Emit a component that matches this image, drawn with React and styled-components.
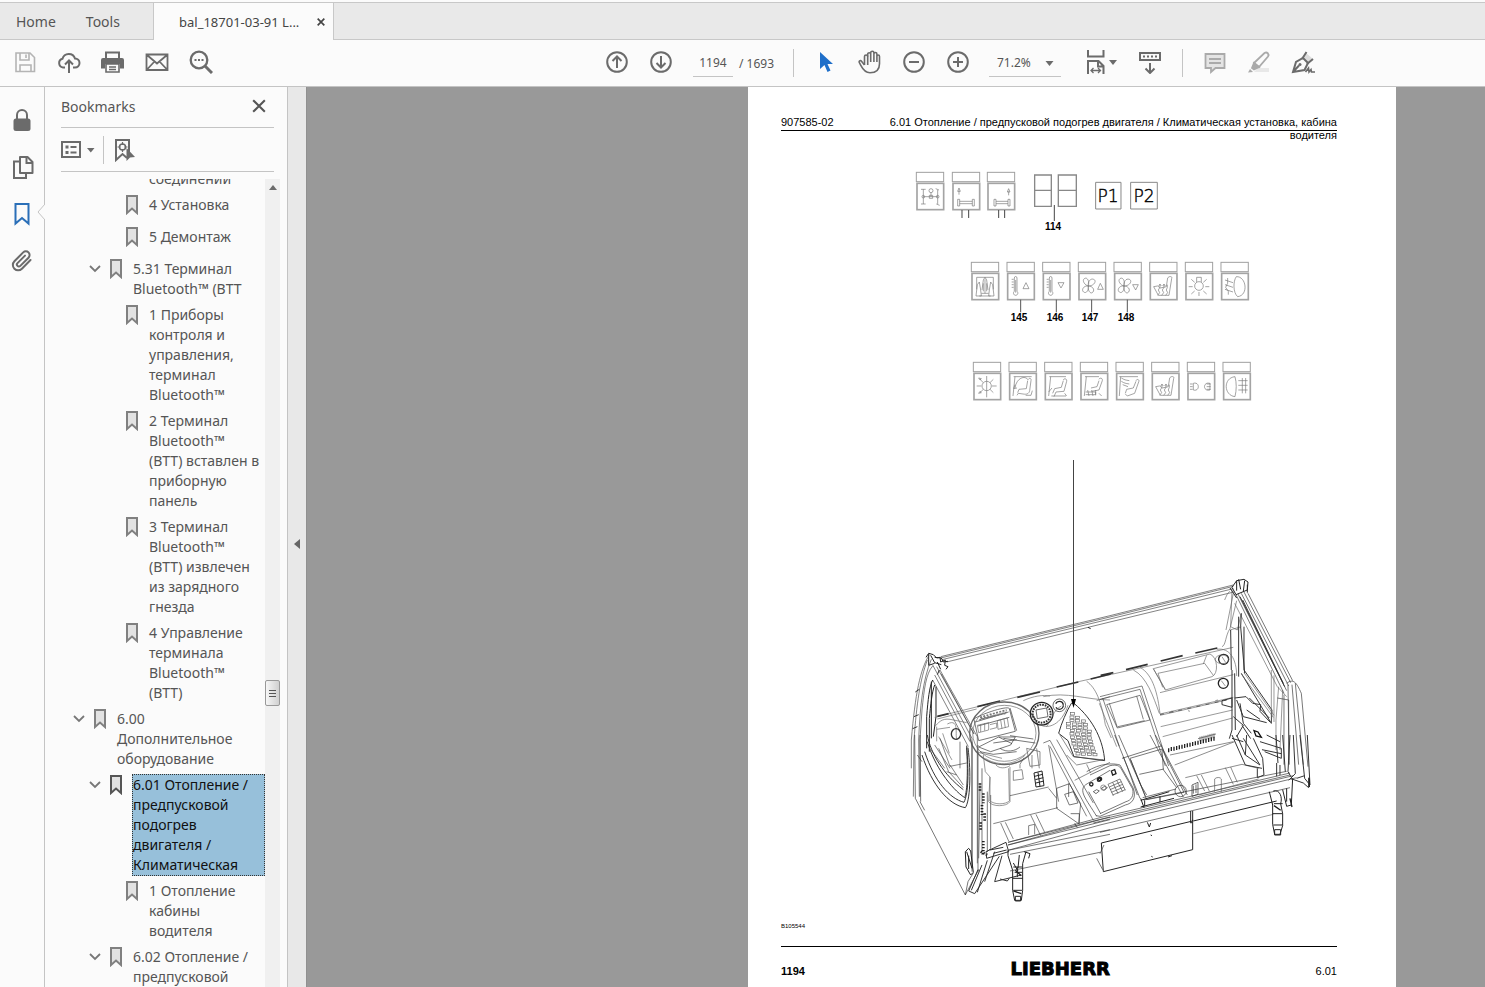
import React from "react";
import styled, { createGlobalStyle } from "styled-components";

const GlobalStyle = createGlobalStyle`
  * {
    box-sizing: border-box;
  }

  body {
    margin: 0;
    font-family: "Noto Sans", "Open Sans", sans-serif;
    font-size: 14px;
    color: #555;
    background: #fbfbfb;
  }

  button,
  input,
  select {
    font: inherit;
    color: inherit;
    border: 0;
    padding: 0;
    margin: 0;
    background: none;
  }
`;

const Window = styled.div`
  display: flex;
  flex-direction: column;
  height: 100vh;
  padding-top: 2px;
  overflow: hidden;
`;

const TabBar = styled.nav`
  display: flex;
  flex: none;
  height: 38px;
  background: #e9e9e9;
  border-top: 1px solid #c8c8c8;
  border-bottom: 1px solid #c8c8c8;
`;

const HomeTabs = styled.div`
  display: flex;
  width: 153px;
  padding-left: 16px;
  gap: 30px;
`;

const FileTab = styled.div`
  display: flex;
  align-items: center;
  justify-content: space-between;
  width: 181px;
  height: 37px;
  padding: 0 8px 0 25px;
  color: #444;
  font-size: 13px;
  background: #fbfbfb;
  border: solid #c8c8c8;
  border-width: 0 1px;
`;

const Plain = styled.button`
  display: flex;
  align-items: center;
`;

const Toolbar = styled.div`
  display: flex;
  flex: none;
  align-items: center;
  height: 47px;
  padding: 0 160px 0 3px;
  border-bottom: 1px solid #c4c4c4;
`;

const ToolGroup = styled.div`
  display: flex;
  align-items: center;
  margin-left: ${({ $end }) => ($end ? "auto" : 0)};
`;

const ToolButton = styled.button`
  display: flex;
  align-items: center;
  justify-content: center;
  width: 44px;
  height: 42px;
  padding-bottom: 2px;
  color: ${({ $color }) => $color || "#6b6b6b"};
`;

const FitButton = styled(ToolButton)`
  width: 46px;
  gap: 1px;
`;

const Separator = styled.span`
  width: 1px;
  height: 28px;
  margin: 0 ${({ $space = 10 }) => $space}px;
  background: #c4c4c4;
`;

const PageBox = styled.label`
  display: flex;
  align-items: center;
  gap: 6px;
  margin: 0 9px 0 10px;
  font-size: 12px;
`;

const PageInput = styled.input`
  width: 40px;
  height: 28px;
  text-align: center;
  border-bottom: 1px solid #c4c4c4;
  outline: none;
`;

const ZoomBox = styled.label`
  position: relative;
  margin: 0 16px 0 9px;
  font-size: 12px;
`;

const ZoomSelect = styled.select`
  width: 72px;
  height: 28px;
  padding-left: 8px;
  appearance: none;
  border-bottom: 1px solid #c4c4c4;
`;

const ZoomArrow = styled.svg`
  position: absolute;
  right: 7px;
  top: 12px;
`;

const Main = styled.main`
  display: flex;
  flex: 1;
  min-height: 0;
`;

const Rail = styled.div`
  position: relative;
  display: flex;
  flex: none;
  flex-direction: column;
  align-items: center;
  gap: 15px;
  width: 45px;
  padding-top: 17px;
  border-right: 1px solid #c4c4c4;
`;

const RailButton = styled.button`
  display: flex;
  align-items: center;
  justify-content: center;
  width: 44px;
  height: 32px;
  color: ${({ $active }) => ($active ? "#2a6fb8" : "#6b6b6b")};
`;

const Notch = styled.svg`
  position: absolute;
  right: -1px;
  top: 117px;
`;

const Panel = styled.aside`
  display: flex;
  flex: none;
  flex-direction: column;
  width: 243px;
  border-right: 1px solid #c4c4c4;
`;

const PanelTitle = styled.div`
  display: flex;
  flex: none;
  align-items: center;
  justify-content: space-between;
  height: 41px;
  margin: 0 13px 0 16px;
  padding: 0 8px 2px 0;
  border-bottom: 1px solid #c4c4c4;
`;

const PanelTools = styled.div`
  display: flex;
  flex: none;
  align-items: center;
  height: 44px;
  margin: 0 13px 0 16px;
  border-bottom: 1px solid #c4c4c4;
  color: #6b6b6b;
`;

const TreeArea = styled.div`
  display: flex;
  flex: 1;
  min-height: 0;
  margin: 7px 7px 0 0;
`;

const Tree = styled.ul`
  flex: 1;
  margin: 0;
  padding: 0;
  overflow: hidden;
  list-style: none;

  li:first-child {
    margin-top: -10px;
  }
`;

const TreeRow = styled.li`
  display: flex;
  align-items: flex-start;
  min-height: 26px;
  margin-bottom: 6px;
  padding-left: ${({ $level }) => 28 + $level * 16}px;
  color: ${({ $selected }) => ($selected ? "#111" : "#555")};
`;

const Toggle = styled.button`
  width: 12px;
  height: 18px;
  margin-right: 9px;
  line-height: 0;
  color: #777;
`;

const Mark = styled.svg`
  flex: none;
  width: 12px;
  margin-right: 10px;
  color: ${({ $selected }) => ($selected ? "#555" : "#808080")};
`;

const TreeLink = styled.a`
  flex: 1;
  margin: ${({ $selected }) => ($selected ? "-1px 0" : 0)};
  padding-left: ${({ $selected }) => ($selected ? 0 : 1)}px;
  line-height: 20px;
  white-space: pre;
  color: inherit;
  text-decoration: none;
  background: ${({ $selected }) => ($selected ? "#97c0da" : "none")};
  border: ${({ $selected }) => ($selected ? "1px dotted #333" : 0)};
`;

const ScrollTrack = styled.div`
  display: flex;
  flex-direction: column;
  align-items: center;
  width: 15px;
  background: #f0f0f0;
`;

const ScrollUp = styled.button`
  width: 15px;
  height: 17px;
  line-height: 0;
`;

const Thumb = styled.div`
  display: flex;
  flex-direction: column;
  align-items: center;
  justify-content: center;
  gap: 2px;
  width: 15px;
  height: 26px;
  margin-top: 484px;
  border: 1px solid #999;
  border-radius: 2px;
  background: linear-gradient(90deg, #f6f6f6, #d0d0d0);
`;

const Grip = styled.span`
  width: 7px;
  height: 1px;
  background: #555;
`;

const Splitter = styled.button`
  flex: none;
  width: 18px;
  padding-top: 13px;
  background: #e8e8e8;
`;

const Viewer = styled.section`
  display: flex;
  flex: 1;
  justify-content: flex-end;
  padding-right: 89px;
  overflow: hidden;
  background: #999;
  border-left: 1px solid #909090;
`;

const Sheet = styled.article`
  display: flex;
  flex: 0 1 648px;
  flex-direction: column;
  padding: 29px 59px 0 33px;
  font-family: "Liberation Sans", Arial, sans-serif;
  font-size: 11px;
  line-height: 13px;
  color: #000;
  background: #fff;
`;

const SheetHead = styled.header`
  display: flex;
  justify-content: space-between;
  height: 15px;
  border-bottom: 1px solid #000;
  white-space: nowrap;
`;

const HeadRest = styled.div`
  margin-top: -2px;
  text-align: right;
`;

const Figure = styled.figure`
  margin: 18px 0 0;

  svg {
    display: block;
    width: 100%;
  }
`;

const Caption = styled.figcaption`
  margin-top: 10px;
  font-size: 6px;
`;

const SheetFoot = styled.footer`
  display: flex;
  align-items: flex-end;
  justify-content: space-between;
  margin-top: 13px;
  padding-top: 11px;
  line-height: 17px;
  border-top: 1px solid #000;
`;

const Logo = styled.span`
  font-family: "DejaVu Sans", sans-serif;
  font-weight: 700;
  font-size: 18px;
  line-height: 22px;
  -webkit-text-stroke: 1px #000;
`;

const Icon = ({ size = 24, children, ...rest }) => (
  <svg
    width={size}
    height={size}
    viewBox="0 0 24 24"
    fill="none"
    stroke="currentColor"
    strokeWidth="2"
    aria-hidden="true"
    {...rest}
  >
    {children}
  </svg>
);

const Caret = ({ d = "M0 0h8L4 5z" }) => (
  <svg width="8" height="5" viewBox="0 0 8 5" aria-hidden="true">
    <path d={d} fill="#6b6b6b" />
  </svg>
);

const SaveIcon = () => (
  <Icon strokeWidth="1.6">
    <path d="M3 3h14l4.500 4.500V21.500H3z" />
    <path d="M7 3v7h9V3M13 4.500v3.500M7 21v-6h11v6" />
  </Icon>
);

const CloudIcon = () => (
  <Icon>
    <path d="M8 17.500H6a4.500 4.500 0 0 1-.5-8.800A6.500 6.500 0 0 1 18 8.500a4.500 4.500 0 0 1 0 9h-2" />
    <path d="M12 23V11M8 14.500l4-4 4 4" />
  </Icon>
);

const PrintIcon = () => (
  <Icon>
    <path d="M5 8V2.500h13V8" />
    <path d="M0 10a2 2 0 0 1 2-2h19a2 2 0 0 1 2 2v8.500h-4V14H4v4.500H0z" fill="currentColor" stroke="none" />
    <path d="M5 14v8h13v-8zM8 17h7M8 19.500h7" strokeWidth="1.600" />
  </Icon>
);

const MailIcon = () => (
  <Icon strokeWidth="1.8">
    <path d="M1.500 4.500h21v15.500h-21zM2 5l10 8.500L22 5M2 19.500l7.500-8M22 19.500l-7.500-8" />
  </Icon>
);

const SearchIcon = () => (
  <Icon>
    <circle cx="10" cy="10" r="8.300" strokeWidth="2.300" />
    <path d="M16 16l7 7" strokeWidth="3" />
    <path d="M5.500 10h2M9 10h2M12.500 10h2" />
  </Icon>
);

const CircleIcon = ({ d }) => (
  <Icon>
    <circle cx="12" cy="12" r="9.800" />
    <path d={d} />
  </Icon>
);

const CursorIcon = () => (
  <Icon>
    <path d="M6 2v17l4.500-4 3 7 3-1.500-3-6.500H19z" fill="currentColor" stroke="none" />
  </Icon>
);

const HandIcon = () => (
  <Icon strokeWidth="1.6">
    <path d="M6.500 15L3.500 11.200c-1.300-1.500-3 .1-2 1.700 2 3.400 4 9.800 10.500 9.800 6 0 9.500-3.400 9.500-9V6.500c0-2-2.600-2-2.600 0V12 4c0-2-3-2-3 0v8V2.800c0-2-3.200-2-3.200 0V12 4.200c0-2-3-2-3 0V15" />
    <path d="M9.700 6.500c0-2-3.200-2-3.200 0V15" />
  </Icon>
);

const FitIcon = () => (
  <Icon>
    <path d="M4 0v6.500h15.500V0" />
    <path d="M4 24V11h10.500l5 5v8M14 11v5.500h5" />
    <path d="M7 20.500h9.500M9.500 18L7 20.500 9.500 23M14 18l2.500 2.500L14 23" strokeWidth="1.300" />
  </Icon>
);

const KeyboardIcon = () => (
  <Icon>
    <path d="M2 3h20v7H2z" />
    <path d="M5 6.500h2M9 6.500h2M13 6.500h2M17 6.500h2M12 13v10M7.500 18.500l4.500 4.500 4.500-4.500" />
  </Icon>
);

const CommentIcon = () => (
  <Icon strokeWidth="1.8">
    <path d="M2.500 4h19v14h-9L8 22V18H2.500z" fill="#e4e4e4" />
    <path d="M6 9h12M6 13h12" />
  </Icon>
);

const HighlightIcon = () => (
  <Icon strokeWidth="1.8">
    <path d="M11 18h11v4H7z" fill="#e8e8e8" stroke="none" />
    <path d="M7 13L17.500 3c2.500-1.500 5 1 3.500 3.500L12 17z" />
    <path d="M7 13l-2 5 2 1.500 5-2.500z" fill="#aaa" />
    <path d="M3 19l3 3-5 .5z" fill="#aaa" stroke="none" />
  </Icon>
);

const SignIcon = () => (
  <Icon strokeWidth="2">
    <path d="M12 8l3-5 7 6-5 4z" fill="#ddd" stroke="none" />
    <path d="M2 22L5 12l7-4 5 5-3.500 7zM2 22l6-6.500" />
    <path d="M11 9l4.500-7M16 14l6-5" />
    <circle cx="9" cy="14.500" r="1.500" fill="currentColor" stroke="none" />
    <path d="M14.500 22l3-4 .5 4 2-2.500.5 2.500H24" strokeWidth="1.600" />
  </Icon>
);

const LockIcon = () => (
  <Icon>
    <rect x="3.500" y="10.500" width="17" height="12.500" rx="2.500" fill="currentColor" stroke="none" />
    <path d="M7 12V7a5 5 0 0 1 10 0v5" />
  </Icon>
);

const PagesIcon = () => (
  <Icon>
    <path d="M10 2h7.500l5 5v11H10z" strokeLinejoin="round" />
    <path d="M16.500 2v6H22M9 6.500H4V23h12v-4" />
  </Icon>
);

const ClipIcon = () => (
  <Icon>
    <path
      d="M20.500 11l-8.600 8.700a5.300 5.300 0 0 1-7.500-7.500l8.800-8.800a3.700 3.700 0 0 1 5.300 5.300l-8.200 8.200a1.900 1.900 0 0 1-2.800-2.800l7.500-7.500"
      strokeLinecap="round"
    />
  </Icon>
);

const switchGlyphs = {
  axles: "M12 18h14M19 18v44M12 62h14M56 16l10 4M62 20v42M58 62l10 4M19 40h43M42 28v12M37 36h10v9H37zM36 22a6 6 0 1 0 12 0a6 6 0 1 0-12 0M15 40a4 4 0 1 0 8 0a4 4 0 1 0-8 0M58 40a4 4 0 1 0 8 0a4 4 0 1 0-8 0",
  axleLeft: "M18 34V22M14 24l4-10 4 10zM14 48v20M20 48v20M14 48h6M14 68h6M20 54h38M20 61h38M58 48v20M64 48v20M58 48h6M58 68h6",
  axleRight: "M62 36V24M58 26l4-10 4 10zM18 48v20M24 48v20M18 48h6M18 68h6M24 54h36M24 61h36M60 48v20M66 48v20M60 48h6M60 68h6",
  defrost: "M14 12h50v36M14 12v36M12 68l4-34 6-8 4 24 2 18zM66 68l-4-34-6-8-4 24-2 18zM30 50l4-30 5-8 5 8 4 30M34 54V30M44 54V30M39 60V18M22 68h34M28 60h22",
  tempUp: "M20 54V14c0-6 8-6 8 0v40c5 4 2 12-4 12s-9-8-4-12zM12 18h6M12 26h6M12 34h6M12 42h6M24 20v38M46 46l9-18 9 18z",
  tempDown: "M18 54V14c0-6 8-6 8 0v40c5 4 2 12-4 12s-9-8-4-12zM10 18h6M10 26h6M10 34h6M10 42h6M22 20v38M44 28l9 16 9-16z",
  fanUp: "M28 38c-10-2-20-16-12-22s16 6 12 22c-2-12 6-24 16-20s2 20-16 20c12 0 20 10 14 18s-16-2-14-18c2 12-6 24-14 18s0-20 14-18M56 48l8-18 9 18z",
  fanDown: "M28 38c-10-2-20-16-12-22s16 6 12 22c-2-12 6-24 16-20s2 20-16 20c12 0 20 10 14 18s-16-2-14-18c2 12-6 24-14 18s0-20 14-18M54 34l9 16 8-16z",
  seatHeat: "M10 40l12-2 8 6 18-4 4-26c3-6 16-6 12 2l-8 50H24zM22 66l6-8-4-8 5-8v-8M34 66l6-8-4-8 5-8v-8M46 66l6-8-4-8 3-8v-8M25 38l4-6 4 6M37 38l4-6 4 6",
  lamp: "M26 38a13 13 0 1 0 26 0a13 13 0 1 0-26 0M32 26V12h14v14M8 40h12M58 40h12M16 18l10 9M62 18l-10 9M16 62l10-9M62 62l-10-9M39 56v12",
  fogFront: "M44 10c30-2 38 56 4 60-14-12-14-46-4-60M10 20l24 8M10 34l24 8M10 48l24 8M18 14v16l-6 12 8 12v10",
  work: "M24 38a14 14 0 1 0 28 0a14 14 0 1 0-28 0M38 8v64M8 38h14M54 38h14M18 18l10 10M58 18L48 28M18 58l10-10M58 58L48 48M14 14l8 2-4 4zM14 60l8-2-4-4z",
  airAll: "M12 10h54M16 10L10 68M56 18c4-6 10-2 8 4l-4 30c-2 10-10 12-20 10l-14-2-4 6M54 22l-4 24-22 2-4 10M16 44c4-30 30-40 40-24M16 34l-4 12 10-2M48 66h16l4-14",
  airMid: "M12 10h50M16 10L10 68M54 20c2-6 12-4 10 4l-8 30-24 2-6 14M54 22l-6 20-20 4-6 14M10 56l10-12M18 68h44M58 60l6 8",
  airFeet: "M12 10h42M16 10L10 68M54 18c2-6 12-4 10 4l-10 28-22 4M54 22l-6 18-18 4M14 56h30v8H14M20 50l4 18M32 50l4 18M44 50v16M54 60l8 8",
  airFace: "M8 10h56M12 10L8 68M58 22c2-6 12-4 8 4l-12 34-22 8-6-6M58 24l-8 20-20 4-4 12M14 14c10 6 12 6 24 8M14 24c10 6 12 6 24 8M18 34l16 6",
  marker: "M16 30c20-6 20 26 0 20zM6 32h8M6 40h8M6 48h8M66 30c-22-6-22 26 0 20zM56 32h12M56 40h12M56 48h12",
  fogRear: "M34 10c-36 4-34 56 0 60 5-20 5-42 0-60M44 22h28M44 36h28M44 50h28M56 14v46M66 14v46",
};

const Switch = ({ x, y, glyph }) => (
  <g transform={`translate(${x} ${y})`}>
    <rect width="82" height="28" stroke="#a0a0a0" />
    <rect x="2" y="33" width="80" height="79" stroke="#a4a4a4" strokeWidth="5" />
    <path d={switchGlyphs[glyph]} transform="translate(2 33)" stroke="#777" strokeWidth="2" />
  </g>
);

const rowTwo = ["defrost", "tempUp", "tempDown", "fanUp", "fanDown", "seatHeat", "lamp", "fogFront"];
const rowThree = ["work", "airAll", "airMid", "airFeet", "airFace", "seatHeat", "marker", "fogRear"];

const SwitchRows = () => (
  <g fill="none" stroke="#888" strokeWidth="3">
    <g transform="translate(900 165) scale(.3333)">
      <Switch x={49} y={22} glyph="axles" />
      <Switch x={157} y={22} glyph="axleLeft" />
      <Switch x={262} y={22} glyph="axleRight" />
      <path d="M404 30h50v94h-50zM404 76h50M475 30h54v94h-54zM475 76h54" strokeWidth="4" />
      <path d="M587 52h76v80h-76zM692 52h80v80h-80z" />
      <path d="M186 135v24M206 135v24M296 135v24M314 135v24M463 120v48" stroke="#444" />
    </g>
    <g transform="translate(960 255) scale(.3333)">
      {rowTwo.map((glyph, i) => (
        <Switch key={glyph} x={34 + i * 107} y={22} glyph={glyph} />
      ))}
      <path d="M182 134v38M289 134v38M395 134v38M502 134v38" stroke="#555" />
      {rowThree.map((glyph, i) => (
        <Switch key={glyph} x={40 + i * 107} y={322} glyph={glyph} />
      ))}
    </g>
  </g>
);

const Labels = () => (
  <g fontFamily="Liberation Sans, Arial, sans-serif" textAnchor="middle">
    <g fontSize="10" fontWeight="700">
      <text x="1053" y="230">114</text>
      <text x="1019" y="321">145</text>
      <text x="1055" y="321">146</text>
      <text x="1090" y="321">147</text>
      <text x="1126" y="321">148</text>
    </g>
    <g fontFamily="DejaVu Sans, sans-serif" fontSize="17" fontWeight="200" stroke="#000" strokeWidth=".4">
      <text x="1108" y="202">P1</text>
      <text x="1144" y="202">P2</text>
    </g>
  </g>
);

// x range of the keys in every row of the switch panel
const keyRows = [
  [512, 530], [510, 545], [510, 552], [500, 560], [500, 565], [512, 575], [510, 575],
  [512, 585], [514, 585], [516, 590], [520, 592], [524, 592], [528, 592],
];

const Keys = () =>
  keyRows.map(([from, to], row) => {
    const keys = [];
    for (let x = from; x < to - 6; x += 17) {
      keys.push(
        <rect key={x} x={x} y={428 + row * 10 + (x - from) / 20} width="12" height="7" />
      );
    }
    return <g key={row}>{keys}</g>;
  });

const CabFrontLeft = () => (
  <g>
    <path d="M122 260L630 137l370-92M122 264L630 141l370-92M126 269L630 147l370-91M140 276L630 156l372-90" stroke="#444" />
    <path d="M78 262l8-12 14 4 10 10 10-2 2 14 14-6-2 16 10 4-6 8M86 252v34l18-6M92 256l12 22 20 6M104 262l20 2 6 12 14-2M112 276l10 22M118 300l-6 14M564 172l8 4" stroke="#222" strokeWidth="3" />
    <path d="M88 254C60 300 46 370 34 510v85M82 270C60 330 50 400 42 510l-2 170M94 268C68 330 60 410 56 510l2 170M98 288C78 310 72 360 66 420l-6 90v170" stroke="#444" />
    <path d="M98 285L216 505v400M110 290l112 202M120 300l112 200v380M98 330L205 530M104 315l106 200M124 312l98 180" stroke="#444" />
    <path d="M98 330c-10 20-14 60-18 110v95M104 345c-8 20-12 60-16 100v100M108 350v90l-8 60M94 335v170" stroke="#222" strokeWidth="3" />
    <path d="M46 366l12-8M42 440l14-6M38 476l14-6" stroke="#333" strokeWidth="3" />
    <path d="M104 442L540 334l460-102M112 447l118-30M430 380c70-16 130 10 200 10M370 392c30-14 60-18 80-14M560 334c28 20 44 60 56 130l18 40M590 392l40-12M598 400l52 130" />
    <path d="M112 439l34-8M232 410l68-17M352 382l68-16M470 351l65-15M572 327l60-15" stroke="#333" strokeWidth="5" />
    <path d="M104 470c10-10 20-26 46-22l50 10M110 470v44M142 462c40-20 20 40 30 48M110 478l40-6M116 500l40 70M128 490l20 60" />
    <ellipse cx="168" cy="492" rx="14" ry="16" stroke="#333" strokeWidth="4" />
    <ellipse cx="313" cy="490" rx="104" ry="94" strokeWidth="4" />
    <ellipse cx="313" cy="490" rx="95" ry="84" />
    <path d="M222 448c2-8 100-44 106-32l18 68-110 28zM226 456l100-30M234 468l94-26M330 414l20 68" stroke="#333" />
    <path d="M240 442l80-22M238 450l86-24M242 446l74-16" stroke="#777" strokeDasharray="6 4" strokeWidth="5" />
    <path d="M232 466l34-8v22l-30 8zM242 464v22M254 460v22M270 464l20-5v14l-20 5M292 452l30-8 4 26-32 8zM302 450l4 26M312 448l4 26" />
    <circle cx="425" cy="431" r="34" stroke="#222" strokeWidth="4" />
    <circle cx="425" cy="431" r="27" stroke="#333" strokeDasharray="5 3" strokeWidth="6" />
    <path d="M408 420l32-6 4 26-32 6z" stroke="#222" />
    <circle cx="478" cy="406" r="19" stroke="#222" />
    <circle cx="478" cy="406" r="12" stroke="#222" strokeWidth="4" strokeDasharray="30 12" />
    <path d="M514 400c-14 24-30 60-38 90l28 22 18 48 92 12c-4-56-30-120-92-172z" stroke="#333" strokeWidth="3" />
    <path d="M440 470c14-20 20-50 44-62M424 466c20 10 60 0 80-60" />
    <g stroke="#666">
      <Keys />
    </g>
  </g>
);

const CabFrontRight = () => (
  <g>
    <path d="M396 52l14-20 22-4 12 8-2 24-34 14zM410 32v30M416 28l6 30M434 32l-4 32M390 54l20 30M442 44v24" stroke="#222" strokeWidth="3" />
    <path d="M408 74L552 370M414 72l146 290M424 70l142 278M432 66l140 272M444 70l134 262" stroke="#333" />
    <path d="M420 80l134 270M428 90l122 250" stroke="#333" strokeWidth="3" />
    <path d="M404 100l128 250 28 30M410 92l-20 84c-14 20-12 50-24 54M396 60l-4 110 20 10 12-50M400 70l-22 110M374 90c8-20 12-24 16-26M390 180l34-10" />
    <path d="M424 130l-2 40 12 140M416 140v180M392 180l2 120M432 170v130l84 120-2 40-90-150" stroke="#333" strokeWidth="3" />
    <path d="M424 312l96 130M432 308l90 128M514 300v160M522 316v140M536 350l-8 100v90M548 360l-8 180" />
    <path d="M560 340c20-16 30-2 44 30l20 220M564 344l4 240M576 344l20 240M586 340l24 244M532 384l34 6v180M552 374v210" stroke="#333" />
    <path d="M2 316l38-8M78 299l65-16M182 273l66-16M286 249l66-15" stroke="#333" strokeWidth="5" />
    <path d="M100 300c40 20 60 80 78 130M120 292c40 22 54 84 60 140l220-50M160 296l170-44c24 10 26 60 6 68l-140 40zM174 310l140-30 26 36M160 296l36 62M174 310l14 42M320 256l-10 26M350 238c40-6 60 30 60 80M180 368l220-54" />
    <path d="M180 436l200-46M182 470l216-50M188 500l210-56M214 424l8 2M264 422l6 2M346 392l8-2" stroke="#666" />
    <path d="M180 434l200-44" stroke="#333" strokeDasharray="12 16" />
    <circle cx="371" cy="268" r="15" stroke="#222" strokeWidth="4" />
    <ellipse cx="366" cy="268" rx="20" ry="13" />
    <circle cx="370" cy="340" r="15" stroke="#222" strokeWidth="4" />
    <path d="M364 332l12 16M366 260l10 16" />
    <path d="M0 380l126-32 80 240M0 388l120-30 76 230M8 384l50 145M20 404l100-28 30 74-98 24zM28 400l24 72M110 378l20 70M54 470l80-18" stroke="#444" />
    <path d="M294 506l54-14M300 500v14M306 498v14M312 497v14M318 496v14M324 494v14M330 492v14M336 491v14M342 490v14" stroke="#444" />
    <path d="M396 300v180l-8 26M404 310l2 170M366 392l30-8v28l-30-8zM404 384l34-4 20 20 24 4-2 20 30 32M420 400l10 60 24 30M410 390l20 50 70 18M440 420l40 28M448 384l60 60M426 466l26 40M400 440l30 26-20 34" stroke="#333" strokeWidth="3" />
    <path d="M462 482l12 4 10 16-16-4z" stroke="#111" strokeWidth="4" />
  </g>
);

const CabRearLeft = () => (
  <g>
    <path d="M44 0l2 190 150 290 40-76M60 200l14 26M60 0l2 200M196 480l8-40 16-26M52 60l14 20" stroke="#333" />
    <path d="M66 60c30 90 80 150 130 158 14-20 18-100 8-180M74 50c30 90 74 140 118 152 14-30 14-90 8-170M82 20c20 70 70 140 112 168 8-20 10-80 6-150M82 0c10 56 50 120 108 164" stroke="#333" strokeWidth="3" />
    <path d="M90 40l44 60M104 30l46 70M120 10l30 84 50-10M116 40l30 70 44 48M140 110l30 10M150 90l40 60M180 20v80" stroke="#444" />
    <path d="M216 20v380M234 30v380M240 150l-4 220M262 170v180l10-10V180M246 100v260" stroke="#333" />
    <path d="M240 145v24M250 175v30M246 210v30M254 235v24M242 262v26M250 318v40M242 350l20 10" stroke="#222" strokeWidth="8" strokeDasharray="4 5" />
    <path d="M206 340l-10 10 2 46 14 24 8-8-8-64zM200 350l16 50M206 362v40" stroke="#222" strokeWidth="3" />
    <path d="M234 404l-28 64 18 8 74-112M246 390l-32 76M262 376l-30 96M284 350l-30 90M258 350l60-28 8 28-66 20zM270 345l40-8M280 355l40-10M284 440l22-78M284 440l80-20M300 432l22 6 6-8" stroke="#333" strokeWidth="3" />
    <path d="M250 60l6 50 14 16-4 74c10 16 54 16 64 0V96M270 126v70M326 100l2 96M268 196c14 14 50 14 62 0M288 90c10 12 30 10 42 2M256 70c30 20 80 26 120-10M226 50l80 20" />
    <path d="M236 36l60-30h50l-14 24-60 20zM280 24l70-10M296 6l40 20M300 40c20 14 46 8 60-4M240 50l40 8 70-8M310 10l96 14M330 2l70 10" stroke="#333" />
    <path d="M340 108l26-4 4 28-30 4zM360 100v-12l12-20M380 40l40 10v40l-30 4zM396 60v40M410 40l8 60" stroke="#555" />
    <path d="M402 114l24-6 6 44-24 4zM404 124l24-6M406 134l24-6M408 144l24-6M414 112l6 42" stroke="#222" strokeWidth="3" />
    <path d="M430 24l20-8 130 240M446 30l30 170M450 34l110 210M446 160l24 30M470 14l110 190M330 182l116-26M280 266l194-48M302 264l24 54M316 262l24 50M392 240l30 62M408 238l26 54M386 300v-28l18-4v30" stroke="#444" />
    <path d="M470 160l38-14 34 60-6 60-66-46zM494 178l26-8 14 34-26 6zM506 146v40M512 236h26v30" stroke="#333" />
    <path d="M524 136l106-54M500 60l30 30 80-16M560 88l12 26M480 0l40 65 92 10" stroke="#555" />
    <path d="M590 244c-30-50-60-80-28-98l68-40M566 170l36 66" stroke="#333" />
    <circle cx="574" cy="148" r="5" stroke="#222" strokeWidth="4" />
    <circle cx="597" cy="134" r="5" stroke="#222" strokeWidth="4" />
    <path d="M580 170l10-6 8 4-10 8zM604 160l10-6 8 4-10 8z" stroke="#222" />
    <path d="M324 322L630 246M324 330L630 254M324 346l306-62M330 358l300-60M524 264l8 14M330 408l270-56M600 356l12-26M590 370l18 34" stroke="#333" />
    <path d="M324 346v16l14 44v60l6 30h20l4-30v-80l10-36M340 396h26M338 430h30M340 466h26M344 412h22M352 396v30M358 360l-4 40M372 350l18 6-4 14M340 384l14 24M346 484h16v14h-16z" stroke="#222" strokeWidth="3" />
    <path d="M346 406l18 16M340 468l24 8" stroke="#222" strokeWidth="4" />
  </g>
);

const CabRearRight = () => (
  <g>
    <path d="M-276 322L0 248l570-134M-276 330L0 254l570-134M-20 264l600-142M0 292l570-134M-276 346L0 270l590-142M130 195l430-86" stroke="#333" />
    <path d="M4 324l274-66V228M4 324l6 86 268-66v-90M272 228v36l6-2M280 258l250-60M152 300l4 2M154 364l4 2M142 262l6 14 4-12M204 366l12-4" stroke="#222" strokeWidth="3" />
    <path d="M280 296l240-58" />
    <path d="M44 0l76 190M56 0l66 150 18 30M70 66l12 30 30 84M66 70l120-38M150 0l100 186M166 0l96 180M90 70l96-28 66 130-112 22zM92 74l44 110M186 44l4 60 40 54M118 118l74-16M128 188l100-26" stroke="#333" />
    <path d="M-40 110C0 84 40 84 60 90l40 70c10 30-4 46-24 50L0 244l-12-2M-30 120l60-28c20-4 28 0 34 10l34 60c4 20-4 34-20 38L0 236" stroke="#333" />
    <path d="M24 148l36-16M28 156l36-16M30 164l38-16M34 172l38-16M38 180l38-16M24 148l16 34M38 142l16 34M50 136l18 34M60 132l16 34" stroke="#444" />
    <path d="M34 108l10-4 4 12-10 4z" stroke="#222" strokeWidth="4" />
    <circle cx="10" cy="158" r="8" />
    <circle cx="0" cy="132" r="5" stroke="#222" strokeWidth="4" />
    <path d="M122 196l86-26M122 216l100-26M134 196v18M180 184v18M122 190l10 28" stroke="#222" strokeWidth="3" />
    <circle cx="242" cy="168" r="17" stroke="#333" />
    <path d="M276 150l18-8v36l-18 6zM280 152v24M288 148v26" stroke="#222" />
    <path d="M206 40v12M214 36v12M222 35v12M230 33v12M238 31v12M246 29v12M254 27v12M262 25v12M270 23v12M278 21v12M286 19v12M294 17v12M302 15v12M310 13v12M318 11v12M326 9v12M334 7v12M342 5v12" stroke="#222" strokeWidth="4" />
    <path d="M210 60l190-40M224 90l180-70M256 128l170-40 50 12M290 122l24 46M304 120l24 48M376 98l24 50M392 96l20 46M344 132c4-6 18-6 20 0v38M344 132v38M296 180l180-48" stroke="#555" />
    <path d="M396 0l40 90 50 10M410 0l26 60 44 30M430 10l50 80M440 0l-4 60M460 10l28 60 4 50-20 8v-28M480 20l64 20v30l-50-20M486 44l58 12M530 84v40M540 90v30M396 10l34 10M500 0l40 20" stroke="#333" strokeWidth="3" />
    <path d="M528 0l6 84M548 0l8 110M570 0l-6 110 12 20M580 0l6 116M600 0l14 130 16 20-8-150M586 116l-20 20M590 130l24-8M570 130l40 14 16 14v-30" stroke="#333" strokeWidth="3" />
    <path d="M508 170l10 40M520 168c20-6 28 20 22 38l6 30v36l-8 26h-16l-6-30V206M518 236h30M520 270h28M522 206h26M524 284h18v16h-18zM548 164l12 50 14-4 4-80M560 160v40" stroke="#222" strokeWidth="3" />
    <path d="M522 212l20 14M570 190l6 26M628 130v26" stroke="#222" strokeWidth="4" />
  </g>
);

const Drawing = () => (
  <svg viewBox="781 160 556 750" role="img" aria-label="B105544">
    <SwitchRows />
    <Labels />
    <g fill="none" stroke="#666" strokeWidth="2">
      <g transform="translate(900 570) scale(.3333)">
        <CabFrontLeft />
      </g>
      <g transform="translate(1100 570) scale(.3333)">
        <CabFrontRight />
      </g>
      <g transform="translate(900 735) scale(.3333)">
        <CabRearLeft />
      </g>
      <g transform="translate(1100 735) scale(.3333)">
        <CabRearRight />
      </g>
    </g>
    <path d="M1073.500 460V702" stroke="#444" />
    <path d="M1071 699h5l-2.500 9z" />
  </svg>
);

const bookmarks = [
  { level: 2, text: "соединений", cut: true },
  { level: 2, text: "4 Установка" },
  { level: 2, text: "5 Демонтаж" },
  { level: 1, open: true, text: "5.31 Терминал\nBluetooth™ (BTT" },
  { level: 2, text: "1 Приборы\nконтроля и\nуправления,\nтерминал\nBluetooth™" },
  { level: 2, text: "2 Терминал\nBluetooth™\n(BTT) вставлен в\nприборную\nпанель" },
  { level: 2, text: "3 Терминал\nBluetooth™\n(BTT) извлечен\nиз зарядного\nгнезда" },
  { level: 2, text: "4 Управление\nтерминала\nBluetooth™\n(BTT)" },
  { level: 0, open: true, text: "6.00\nДополнительное\nоборудование" },
  {
    level: 1,
    open: true,
    selected: true,
    text: "6.01 Отопление /\nпредпусковой\nподогрев\nдвигателя /\nКлиматическая",
  },
  { level: 2, text: "1 Отопление\nкабины\nводителя" },
  { level: 1, open: true, text: "6.02 Отопление /\nпредпусковой" },
];

const Bookmark = ({ level, text, open, selected, cut }) => (
  <TreeRow $level={level} $selected={selected} style={cut && { minHeight: 0 }}>
    <Toggle aria-label={open ? "Collapse" : undefined} disabled={!open}>
      {open && (
        <svg width="12" height="18" viewBox="0 0 12 18" fill="none" stroke="currentColor" strokeWidth="1.800">
          <path d="M1 7l5 5 5-5" />
        </svg>
      )}
    </Toggle>
    <Mark $selected={selected} height="20" viewBox="0 0 12 20" aria-hidden="true">
      {!cut && (
        <path
          d="M1 1h10v17l-5-4.500-5 4.500z"
          fill="#e2e2e2"
          stroke="currentColor"
          strokeWidth="2"
        />
      )}
    </Mark>
    <TreeLink href="#" $selected={selected}>
      {text}
    </TreeLink>
  </TreeRow>
);

const App = () => (
  <Window>
    <GlobalStyle />
    <TabBar>
      <HomeTabs>
        <Plain>Home</Plain>
        <Plain>Tools</Plain>
      </HomeTabs>
      <FileTab>
        <Plain>bal_18701-03-91 L...</Plain>
        <Plain aria-label="Close tab">
          <Icon size={8} strokeWidth="5">
            <path d="M2 2l20 20M22 2L2 22" />
          </Icon>
        </Plain>
      </FileTab>
    </TabBar>

    <Toolbar>
      <ToolGroup>
        <ToolButton aria-label="Save" $color="#b4b4b4"><SaveIcon /></ToolButton>
        <ToolButton aria-label="Upload"><CloudIcon /></ToolButton>
        <ToolButton aria-label="Print"><PrintIcon /></ToolButton>
        <ToolButton aria-label="Mail"><MailIcon /></ToolButton>
        <ToolButton aria-label="Find"><SearchIcon /></ToolButton>
      </ToolGroup>
      <ToolGroup $end>
        <ToolButton aria-label="Previous page">
          <CircleIcon d="M12 18V7M7.500 11L12 6.500 16.500 11" />
        </ToolButton>
        <ToolButton aria-label="Next page">
          <CircleIcon d="M12 6v11M7.500 13l4.500 4.500 4.500-4.500" />
        </ToolButton>
        <PageBox>
          <PageInput defaultValue="1194" aria-label="Page" />
          / 1693
        </PageBox>
        <Separator />
        <ToolButton aria-label="Select" $color="#1f6fc9"><CursorIcon /></ToolButton>
        <ToolButton aria-label="Hand"><HandIcon /></ToolButton>
        <ToolButton aria-label="Zoom out"><CircleIcon d="M7 12h10" /></ToolButton>
        <ToolButton aria-label="Zoom in"><CircleIcon d="M7 12h10M12 7v10" /></ToolButton>
        <ZoomBox>
          <ZoomSelect aria-label="Zoom">
            <option>71.2%</option>
          </ZoomSelect>
          <ZoomArrow width="9" height="5" viewBox="0 0 8 5">
            <path d="M0 0h8L4 5z" fill="#6b6b6b" />
          </ZoomArrow>
        </ZoomBox>
        <FitButton aria-label="Fit width"><FitIcon /><Caret /></FitButton>
        <ToolButton aria-label="Toolbar" style={{ marginLeft: 5 }}><KeyboardIcon /></ToolButton>
        <Separator />
        <ToolButton aria-label="Comment" $color="#aaa"><CommentIcon /></ToolButton>
        <ToolButton aria-label="Highlight" $color="#aaa"><HighlightIcon /></ToolButton>
        <ToolButton aria-label="Sign"><SignIcon /></ToolButton>
      </ToolGroup>
    </Toolbar>

    <Main>
      <Rail>
        <RailButton aria-label="Security"><LockIcon /></RailButton>
        <RailButton aria-label="Pages"><PagesIcon /></RailButton>
        <RailButton aria-label="Bookmarks" $active>
          <Icon>
            <path d="M5.500 2h13v19.500L12 16l-6.500 5.500z" />
          </Icon>
        </RailButton>
        <RailButton aria-label="Attachments"><ClipIcon /></RailButton>
        <Notch width="8" height="16" viewBox="0 0 8 16">
          <path d="M8 0L1 8l7 8" fill="#fbfbfb" stroke="#c4c4c4" />
        </Notch>
      </Rail>

      <Panel>
        <PanelTitle>
          Bookmarks
          <Plain aria-label="Close panel">
            <Icon size={14} strokeWidth="3.500">
              <path d="M2 2l20 20M22 2L2 22" />
            </Icon>
          </Plain>
        </PanelTitle>
        <PanelTools>
          <Plain aria-label="Options">
            <svg width="34" height="18" viewBox="0 0 34 18" fill="none" stroke="currentColor" strokeWidth="2">
              <path d="M1 1h18v15H1zM9.500 6h6M9.500 11.500h6" />
              <path d="M4.500 6h3M4.500 11.500h3" strokeWidth="3" />
              <path d="M26 7h7.500l-3.700 4.500z" fill="currentColor" stroke="none" />
            </svg>
          </Plain>
          <Separator $space={8} />
          <Plain aria-label="Find current bookmark">
            <svg width="24" height="24" viewBox="0 0 24 24" fill="none" stroke="currentColor">
              <path d="M15 20l-4.500-4L4 22V2h13v12" strokeWidth="2" />
              <circle cx="10.500" cy="9" r="3" strokeWidth="1.500" />
              <path d="M10.500 4v3M10.500 11v3M5.500 9h3M12.500 9h3" strokeWidth="1.200" />
              <path d="M14.500 10v13l3.500-3.500 5-.5z" fill="currentColor" stroke="none" />
            </svg>
          </Plain>
        </PanelTools>
        <TreeArea>
          <Tree>
            {bookmarks.map((item, i) => (
              <Bookmark key={i} {...item} />
            ))}
          </Tree>
          <ScrollTrack>
            <ScrollUp aria-label="Scroll up">
              <Caret d="M0 5h8L4 0z" />
            </ScrollUp>
            <Thumb>
              <Grip />
              <Grip />
              <Grip />
            </Thumb>
          </ScrollTrack>
        </TreeArea>
      </Panel>

      <Splitter aria-label="Hide panel">
        <svg width="6" height="10" viewBox="0 0 6 10">
          <path d="M6 0v10L0 5z" fill="#666" />
        </svg>
      </Splitter>

      <Viewer>
        <Sheet>
          <SheetHead>
            <span>907585-02</span>
            <span>
              6.01 Отопление / предпусковой подогрев двигателя / Климатическая установка, кабина
            </span>
          </SheetHead>
          <HeadRest>водителя</HeadRest>
          <Figure>
            <Drawing />
            <Caption>B105544</Caption>
          </Figure>
          <SheetFoot>
            <b>1194</b>
            <Logo>LIEBHERR</Logo>
            <span>6.01</span>
          </SheetFoot>
        </Sheet>
      </Viewer>
    </Main>
  </Window>
);

export default App;
